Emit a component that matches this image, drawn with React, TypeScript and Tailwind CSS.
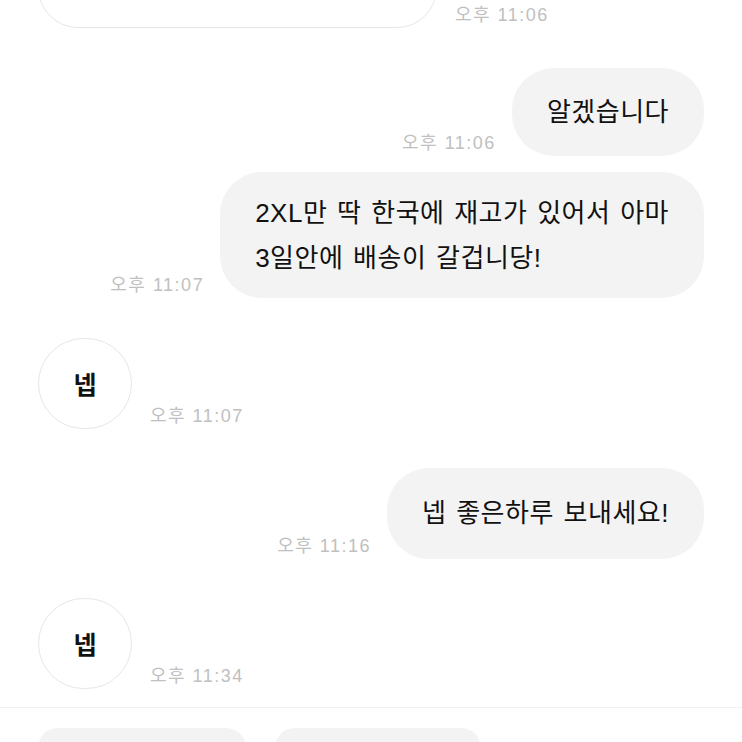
import React from "react";

const font = { fontFamily: '"Noto Sans CJK KR", "Noto Sans", sans-serif' };
const mixFont = { fontFamily: '"Liberation Sans", "Noto Sans CJK KR", sans-serif' };

function Time({ t }: { t: string }) {
  return (
    <span
      className="text-[18px] leading-[20px] tracking-[1.5px] text-[#c0c0c0] whitespace-nowrap mb-[3px]"
      style={mixFont}
    >
      {t}
    </span>
  );
}

function Out({ children, t, h }: { children: React.ReactNode; t: string; h?: string }) {
  return (
    <div className="flex justify-end items-end gap-[16px] pr-[38px]">
      <Time t={t} />
      <div
        className={`bg-[#f3f3f3] rounded-[42px] px-[35px] flex items-center text-[26px] leading-[45px] tracking-[0.5px] [word-spacing:2px] text-[#111] whitespace-nowrap ${h ?? ""}`}
        style={mixFont}
      >
        {children}
      </div>
    </div>
  );
}

function In({ t }: { t: string }) {
  return (
    <div className="flex items-end gap-[18px] pl-[38px]">
      <div className="w-[94px] h-[91px] rounded-full border border-[#e6e6e6] bg-white flex items-center justify-center text-[25px] font-bold text-[#111]">
        넵
      </div>
      <Time t={t} />
    </div>
  );
}

export default function App() {
  return (
    <div className="w-[742px] h-[742px] bg-white overflow-hidden flex flex-col" style={font}>
      <div className="flex items-end gap-[18px] pl-[38px] -mt-[62px]">
        <div className="w-[399px] h-[90px] rounded-[40px] border border-[#e6e6e6] bg-white" />
        <Time t="오후 11:06" />
      </div>
      <div className="mt-[40px]">
        <Out t="오후 11:06" h="h-[88px]">알겠습니다</Out>
      </div>
      <div className="mt-[16px]">
        <Out t="오후 11:07" h="pt-[19px] pb-[17px]">
          <span>
            2XL만 딱 한국에 재고가 있어서 아마
            <br />
            3일안에 배송이 갈겁니당!
          </span>
        </Out>
      </div>
      <div className="mt-[40px]">
        <In t="오후 11:07" />
      </div>
      <div className="mt-[39px]">
        <Out t="오후 11:16" h="h-[91px]">넵 좋은하루 보내세요!</Out>
      </div>
      <div className="mt-[39px]">
        <In t="오후 11:34" />
      </div>
      <div className="mt-[18px] border-t border-[#f0f0f0]" />
      <div className="mt-[20px] flex gap-[29px] pl-[38px]">
        <div className="w-[208px] h-[40px] rounded-[20px] bg-[#f3f3f3]" />
        <div className="w-[206px] h-[40px] rounded-[20px] bg-[#f3f3f3]" />
      </div>
    </div>
  );
}
